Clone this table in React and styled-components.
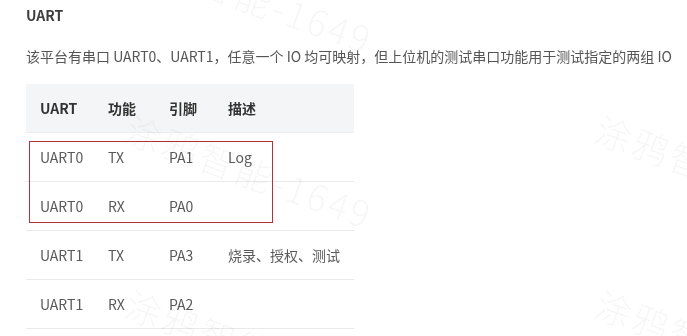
import React from "react";
import styled, { createGlobalStyle } from "styled-components";

const Global = createGlobalStyle`
  html, body { margin: 0; padding: 0; background: #fff; }
  body {
    font-family: "Noto Sans CJK SC", "Noto Sans", sans-serif;
    -webkit-font-smoothing: antialiased;
  }
`;

const Page = styled.div`
  position: relative;
  width: 687px;
  height: 336px;
  overflow: hidden;
  box-sizing: border-box;
  padding: 5px 26px 0;
  will-change: transform;
`;

const Heading = styled.h3`
  margin: 0;
  font-size: 14px;
  line-height: 20px;
  font-weight: 700;
  color: #3d3d3d;
`;

const Paragraph = styled.p`
  margin: 20px 0 0;
  font-size: 14px;
  line-height: 22px;
  color: #555;
  white-space: nowrap;
`;

const TableWrap = styled.div`
  position: relative;
  margin-top: 17px;
  width: 328px;
`;

const Table = styled.table`
  border-collapse: collapse;
  table-layout: fixed;
  width: 328px;
  font-size: 14px;
`;

const HeadRow = styled.tr`
  background: #f4f5f6;
  border-bottom: 1px solid #ebedf0;
`;

const Row = styled.tr`
  border-bottom: 1px solid #e8e9eb;
`;

const Th = styled.th`
  width: ${(p) => p.$w}px;
  height: 48px;
  padding: 0 0 0 14px;
  text-align: left;
  font-weight: 700;
  color: #333;
  box-sizing: border-box;
  white-space: nowrap;
`;

const Td = styled.td`
  height: 48px;
  padding: 0 0 0 14px;
  color: #595959;
  white-space: nowrap;
`;

const Highlight = styled.div`
  position: absolute;
  left: 3px;
  top: 57px;
  width: 244px;
  height: 82px;
  box-sizing: border-box;
  border: 1px solid #b3303d;
  pointer-events: none;
`;

const Watermark = styled.span`
  position: absolute;
  left: ${(p) => p.$x}px;
  top: ${(p) => p.$y}px;
  transform-origin: left top;
  transform: rotate(20deg);
  font-size: 36px;
  line-height: 1;
  letter-spacing: 3px;
  font-weight: 300;
  color: rgba(0, 0, 0, 0.035);
  white-space: nowrap;
  pointer-events: none;
  font-family: "Noto Sans CJK SC", sans-serif;
`;

const cols = [
  { label: "UART", w: 68 },
  { label: "功能", w: 61 },
  { label: "引脚", w: 59 },
  { label: "描述", w: 140 },
];

const rows = [
  ["UART0", "TX", "PA1", "Log"],
  ["UART0", "RX", "PA0", ""],
  ["UART1", "TX", "PA3", "烧录、授权、测试"],
  ["UART1", "RX", "PA2", ""],
];

const marks = [
  [134, -66],
  [134, 109],
  [134, 284],
  [604, 109],
  [604, 284],
];

export default function App() {
  return (
    <>
      <Global />
      <Page lang="zh-CN">
        <Heading>UART</Heading>
        <Paragraph>
          该平台有串口 UART0、UART1，任意一个 IO 均可映射，但上位机的测试串口功能用于测试指定的两组 IO
        </Paragraph>
        <TableWrap>
          <Table>
            <thead>
              <HeadRow>
                {cols.map((c) => (
                  <Th key={c.label} $w={c.w}>
                    {c.label}
                  </Th>
                ))}
              </HeadRow>
            </thead>
            <tbody>
              {rows.map((r, i) => (
                <Row key={i}>
                  {r.map((cell, j) => (
                    <Td key={j}>{cell}</Td>
                  ))}
                </Row>
              ))}
            </tbody>
          </Table>
          <Highlight />
        </TableWrap>
        {marks.map(([x, y], i) => (
          <Watermark key={i} $x={x} $y={y}>
            涂鸦智能-1649
          </Watermark>
        ))}
      </Page>
    </>
  );
}
